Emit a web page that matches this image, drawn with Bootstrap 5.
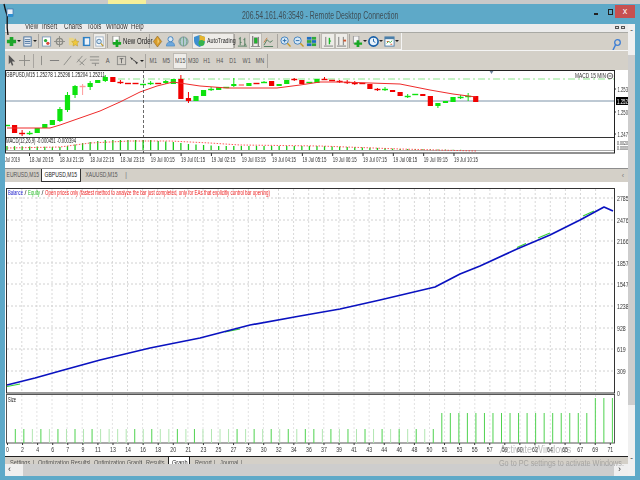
<!DOCTYPE html>
<html lang="en">
<head>
<meta charset="utf-8">
<title>Remote Desktop Connection</title>
<link href="https://cdn.jsdelivr.net/npm/bootstrap@5.3.0/dist/css/bootstrap.min.css" rel="stylesheet">
<style>
html,body{margin:0;width:640px;height:480px;overflow:hidden;background:#5ea9c8;font-family:"Liberation Sans",sans-serif;color:#333}
.page-wrap{position:relative;width:640px;height:480px;filter:blur(.3px)}
.top-strip{height:4px;background:linear-gradient(90deg,#c9c9c9 0,#c9c9c9 108px,#f5ef9a 108px,#f5ef9a 146px,#c9c9c9 146px)}
.title-row{height:20px;position:relative;font-size:11px;color:#3f4f57}
.title-txt{padding-top:3px;white-space:nowrap;transform:scaleX(.63)}
.win-btn{position:absolute;top:1px;height:13px}
.win-min{left:594px;width:4px;top:9px;height:1.5px;background:#222}
.win-max{left:608px;top:5px;width:5px;height:6px;border:1px solid #222}
.win-close{left:615px;width:20px;background:#c75050;color:#fff;font-size:9px;line-height:13px;text-align:center}
.frame-row{height:452px;padding:0 5px}
.main-col{width:623px}
.menu-row{height:8px;background:#ebebeb;overflow:hidden;font-size:8.5px;line-height:4px;color:#333;position:relative}
.menu-row span{position:absolute;top:0;transform:scaleX(.72);transform-origin:left}
.mini-box{position:absolute;top:2px;width:3.5px;height:3px;background:#ddd;border:1px solid #555}
.tbar{background:#d4d0c8;font-size:7.5px;color:#333}
.tbar1{height:18px;border-top:1px solid #a9a9a4;position:relative}
.tbar2{height:20px;position:relative;border-top:1px solid #f5f5f5}
.tool-row{height:100%;width:fit-content}
.tbar1 .tool-row{border-bottom:1px solid #f4f4f4;border-right:1px solid #f4f4f4;padding-right:2px}
.ti{width:13.3px;height:16px;flex:none}
.ti svg{display:block;width:11px;height:11px}
.ti-car{width:2.7px;flex:none;overflow:visible}
.ti-car svg{display:block;margin-left:-1px}
.ti-sep{width:1px;height:14px;background:#a8a5a0;margin:0 1px;flex:none}
.ti-on{background:#eeece8;box-shadow:inset 0 0 0 1px #bdbab4}
.ti-txt{font-size:7.5px;color:#555}
.sq-txt{display:inline-block;white-space:nowrap;transform:scaleX(.72)}
.sq-tab{display:inline-block;white-space:nowrap;transform:scaleX(.63)}
.ti-a{font-size:8px}
.order-lbl{width:25px;flex:none;font-size:8.5px;white-space:nowrap;color:#222;transform:scaleX(.72);transform-origin:left}
.auto-btn{width:42px;height:16px;background:#eeece8;box-shadow:inset 0 0 0 1px #bdbab4;font-size:8px;white-space:nowrap;flex:none;color:#222;padding-left:2px;margin:0 -1px 0 -2px}
.auto-btn svg{flex:none}
.auto-lbl{display:block;flex:none;width:28px;transform:scaleX(.66);transform-origin:left;margin-left:2px}
.side-icons{position:absolute;left:607px;top:6px}
.chart-zone{height:98px;background:#fff}
.chart-zone svg,.test-zone svg{display:block}
.sym-row{height:14px;background:#d4d0c8;border-top:1px solid #8d8d8d;font-size:8px;color:#555;position:relative}
.sym-tab{height:12px;line-height:12px;white-space:nowrap;text-align:center;overflow:visible}
.sym-w1{width:36px}
.sym-w2{width:40px;background:#fff;border:1px solid #333;border-top:0;color:#222;height:13px;border-radius:0 0 1px 1px}
.sym-w3{width:42px}
.sym-w4{width:6px;color:#888}
.sym-arrow{position:absolute;right:4px;top:3px;color:#777;font-size:7px;line-height:7px}
.test-zone{height:275px;background:#fff}
.term-tabs{height:8px;background:#d4d0c8;border-top:1px solid #222;font-size:8px;line-height:11px;color:#555;overflow:hidden;margin-top:-1px;position:relative}
.term-tabs span{position:absolute;top:0;white-space:nowrap;transform:scaleX(.7);transform-origin:left}
.term-on{background:#fff;color:#222}
.term-slot{position:absolute;left:163px;top:-1px;width:22px;height:9px;background:#fff;border-left:1px solid #222;border-right:1px solid #222}
.hscroll{height:12px;background:#cdcdcd;position:relative;font-size:9px;color:#333}
.hs-left{position:absolute;left:0;top:0;width:18px;height:12px;background:#efefef;padding-left:3px;line-height:10px}
.hs-right{position:absolute;right:0;top:0;width:14px;height:12px;background:#efefef;padding-left:4px;line-height:10px}
.vscroll{width:7px;height:452px;background:#f0f0f0;position:relative}
.vs-thumb{position:absolute;left:0;top:31px;width:7px;height:350px;background:#cdcdcd}
.vs-arrow{position:absolute;left:0;width:7px;text-align:center;font-size:8px;line-height:7px;color:#333}
.rdp-squiggle{position:absolute;left:0;top:0;width:20px;height:40px}
.wm-a,.wm-b{position:absolute;color:rgba(120,120,120,.5);white-space:nowrap;transform-origin:left}
.wm-a{left:500px;top:441px;font-size:11px;transform:scaleX(.82)}
.wm-b{left:499px;top:457px;font-size:8.5px;transform:scaleX(.85)}
</style>
</head>
<body>
<div class="page-wrap">
  <div class="top-strip"></div>
  <div class="title-row d-flex justify-content-center">
    <div class="title-txt">206.54.161.46:3549 - Remote Desktop Connection</div>
    <div class="win-btn win-min"></div><div class="win-btn win-max"></div><div class="win-btn win-close">x</div>
  </div>
  <div class="frame-row d-flex">
    <div class="main-col">
      <div class="menu-row"><span style="left:20px">View</span><span style="left:37px">Insert</span><span style="left:59px">Charts</span><span style="left:82px">Tools</span><span style="left:101px">Window</span><span style="left:126px">Help</span><i class="mini-box" style="left:610px"></i><i class="mini-box" style="left:616px"></i></div>
      <div class="tbar tbar1">
        <div class="tool-row d-flex align-items-center">
          <div class="ti d-flex align-items-center justify-content-center"><svg viewBox="0 0 12 12"><path d="M4 1h4v3h3v4H8v3H4V8H1V4h3z" fill="#1fa52b"/></svg></div>
          <div class="ti-car"><svg width="5" height="4" viewBox="0 0 5 4"><path d="M0 1h4L2 3z" fill="#222"/></svg></div>
          <div class="ti d-flex align-items-center justify-content-center"><svg viewBox="0 0 12 12"><rect x="2" y="1" width="8" height="10" fill="#e8eef5" stroke="#47709b"/><path d="M3 4h6M3 6h6M3 8h6" stroke="#47709b"/></svg></div>
          <div class="ti-car"><svg width="5" height="4" viewBox="0 0 5 4"><path d="M0 1h4L2 3z" fill="#222"/></svg></div>
          <div class="ti-sep"></div>
          <div class="ti d-flex align-items-center justify-content-center"><svg viewBox="0 0 12 12"><rect x="1.500" y="1" width="9" height="10" fill="#fff" stroke="#7d9bb8"/><circle cx="5" cy="5" r="1.800" fill="#2eaa3a"/><circle cx="7.500" cy="8" r="1.800" fill="#d94a3a"/></svg></div>
          <div class="ti d-flex align-items-center justify-content-center"><svg viewBox="0 0 12 12"><circle cx="6" cy="6" r="3.500" fill="none" stroke="#8b8b85" stroke-width="1.400"/><path d="M6 0v12M0 6h12" stroke="#8b8b85"/></svg></div>
          <div class="ti d-flex align-items-center justify-content-center"><svg viewBox="0 0 12 12"><path d="M1 2h5l1 2v6H1z" fill="#e9d58a"/><path d="M8 3l1.200 2.600L12 6l-2 2 .5 3L8 9.600 5.500 11 6 8 4 6l2.800-.4z" fill="#f0c93c" stroke="#b99420" stroke-width=".5"/></svg></div>
          <div class="ti d-flex align-items-center justify-content-center"><svg viewBox="0 0 12 12"><rect x="2" y="1" width="8" height="10" fill="#2c7fc4"/><rect x="4" y="2.500" width="5" height="7" fill="#eef4fa"/></svg></div>
          <div class="ti ti-on d-flex align-items-center justify-content-center"><svg viewBox="0 0 12 12"><rect x="2" y="1" width="8" height="10" fill="#fff" stroke="#9cb0c4"/><circle cx="5.500" cy="6" r="2.500" fill="#cfe4f5" stroke="#4f7da6"/><path d="M7.500 8l2.500 3" stroke="#c49a2a" stroke-width="1.300"/></svg></div>
          <div class="ti-sep"></div>
          <div class="ti d-flex align-items-center justify-content-center"><svg viewBox="0 0 12 12"><rect x="2" y="0" width="7" height="8" fill="#fff" stroke="#8b8b85"/><path d="M5 4h3v2.500h3v3H8V12H5V9.500H2v-3h3z" fill="#16a822"/></svg></div>
          <div class="order-lbl">New Order</div>
          <div class="ti-sep"></div>
          <div class="ti d-flex align-items-center justify-content-center"><svg viewBox="0 0 12 12"><path d="M6 0l4.500 6L6 12 1.500 6z" fill="#d89c2c" stroke="#8c611a" stroke-width=".6"/><path d="M6 2L8 6 6 9z" fill="#f2cf74"/></svg></div>
          <div class="ti d-flex align-items-center justify-content-center"><svg viewBox="0 0 12 12"><circle cx="6" cy="3.500" r="2.800" fill="#d6e8f7" stroke="#3d7fbd"/><path d="M1.500 11c0-3.500 2-4.500 4.500-4.500s4.500 1 4.500 4.500z" fill="#6ea8dc" stroke="#3d7fbd" stroke-width=".6"/></svg></div>
          <div class="ti d-flex align-items-center justify-content-center"><svg viewBox="0 0 12 12"><circle cx="6" cy="6" r="5" fill="#b3c9d3" stroke="#7c939d"/><path d="M6 1v10M3.500 2c-1.500 3-1.500 5 0 8M8.500 2c1.500 3 1.500 5 0 8" stroke="#5f9c6a" fill="none" stroke-width=".8"/></svg></div>
          <div class="ti-sep"></div>
          <div class="auto-btn d-flex align-items-center"><svg width="11" height="12" viewBox="0 0 11 12"><path d="M5.500 0L11 2v4c0 3-2.500 5-5.500 6C2.500 11 0 9 0 6V2z" fill="#3d8fd0"/><path d="M5.500 0L11 2v4H5.500z" fill="#e6b52e"/><circle cx="7.500" cy="8" r="3" fill="#37b34a"/></svg><span class="auto-lbl">AutoTrading</span></div>
          <div class="ti-sep"></div>
          <div class="ti d-flex align-items-center justify-content-center"><svg viewBox="0 0 12 12"><path d="M3.500 1v9M2 3h1.500M3.500 7H5M8.500 2v9M7 4h1.500M8.500 9H10M1 11h10" stroke="#4d7a5a" fill="none"/></svg></div>
          <div class="ti ti-on d-flex align-items-center justify-content-center"><svg viewBox="0 0 12 12"><path d="M3 0v11M9 1v11" stroke="#555"/><rect x="4.500" y="2" width="3.500" height="6" fill="#1db82a" stroke="#555" stroke-width=".4"/><path d="M1 11.500h10" stroke="#888"/></svg></div>
          <div class="ti d-flex align-items-center justify-content-center"><svg viewBox="0 0 12 12"><path d="M1 10l3.500-6 3 3 3-2M1 11.500h10" stroke="#4d7a5a" fill="none"/><path d="M1 7l3.500-5" stroke="#c97c3c" fill="none"/></svg></div>
          <div class="ti-sep"></div>
          <div class="ti d-flex align-items-center justify-content-center"><svg viewBox="0 0 12 12"><circle cx="5" cy="5" r="4" fill="#d5e8f7" stroke="#3d7fbd"/><path d="M3 5h4M5 3v4" stroke="#2a6aa8"/><path d="M8 8l3.500 3.500" stroke="#c49a2a" stroke-width="1.500"/></svg></div>
          <div class="ti d-flex align-items-center justify-content-center"><svg viewBox="0 0 12 12"><circle cx="5" cy="5" r="4" fill="#d5e8f7" stroke="#3d7fbd"/><path d="M3 5h4" stroke="#2a6aa8"/><path d="M8 8l3.500 3.500" stroke="#c49a2a" stroke-width="1.500"/></svg></div>
          <div class="ti d-flex align-items-center justify-content-center"><svg viewBox="0 0 12 12"><rect x="1" y="1" width="5" height="3" fill="#1d6fc0"/><rect x="6.500" y="1" width="4.500" height="3" fill="#2fa83a"/><rect x="1" y="4.500" width="5" height="3" fill="#2fa83a"/><rect x="6.500" y="4.500" width="4.500" height="3" fill="#1d6fc0"/><rect x="1" y="8" width="5" height="3" fill="#1d6fc0"/><rect x="6.500" y="8" width="4.500" height="3" fill="#2fa83a"/></svg></div>
          <div class="ti-sep"></div>
          <div class="ti ti-on d-flex align-items-center justify-content-center"><svg viewBox="0 0 12 12"><path d="M3 1v9M1 11h10" stroke="#777"/><path d="M7 2v7" stroke="#1db82a" stroke-width="1.500"/><path d="M7 4l2 1.500L7 7z" fill="#1db82a"/></svg></div>
          <div class="ti ti-on d-flex align-items-center justify-content-center"><svg viewBox="0 0 12 12"><path d="M3 1v9M8 1v9M1 11h10" stroke="#777"/><path d="M8 4h3v2H8z" fill="#d2542c"/></svg></div>
          <div class="ti-sep"></div>
          <div class="ti d-flex align-items-center justify-content-center"><svg viewBox="0 0 12 12"><rect x="1.500" y="0" width="6" height="8" fill="#f4f4f4" stroke="#999"/><path d="M5 4.500h3V7h3v2.500H8V12H5V9.500H2.500V7H5z" fill="#16a822"/></svg></div>
          <div class="ti-car"><svg width="5" height="4" viewBox="0 0 5 4"><path d="M0 1h4L2 3z" fill="#222"/></svg></div>
          <div class="ti d-flex align-items-center justify-content-center"><svg viewBox="0 0 12 12"><circle cx="6" cy="6" r="5" fill="#e8f2fb" stroke="#175fa8" stroke-width="1.800"/><path d="M6 3v3l2 1" stroke="#175fa8" fill="none"/></svg></div>
          <div class="ti-car"><svg width="5" height="4" viewBox="0 0 5 4"><path d="M0 1h4L2 3z" fill="#222"/></svg></div>
          <div class="ti d-flex align-items-center justify-content-center"><svg viewBox="0 0 12 12"><rect x="1" y="1" width="10" height="10" fill="#fff" stroke="#4a7ea8"/><rect x="1" y="1" width="10" height="2.500" fill="#4a7ea8"/><path d="M3 8l2-2 2 1 2-2" stroke="#2fa83a" fill="none"/><path d="M3 6h2M7 9h2" stroke="#d2542c"/></svg></div>
          <div class="ti-car"><svg width="5" height="4" viewBox="0 0 5 4"><path d="M0 1h4L2 3z" fill="#222"/></svg></div>
        </div>
        <div class="side-icons"><svg width="9" height="12" viewBox="0 0 9 12"><circle cx="5.500" cy="3.500" r="2.800" fill="none" stroke="#3f7fd4" stroke-width="1.300"/><path d="M3.500 6L1 11" stroke="#3f7fd4" stroke-width="1.500"/></svg></div>
      </div>
      <div class="tbar tbar2">
        <div class="tool-row d-flex align-items-center">
          <div class="ti d-flex align-items-center justify-content-center"><svg viewBox="0 0 12 12"><path d="M3 0l7 7H6.500L8 11l-1.500.8L5 8l-2 2z" fill="#555"/></svg></div>
          <div class="ti d-flex align-items-center justify-content-center"><svg viewBox="0 0 12 12"><path d="M6 0v12M0 6h12" stroke="#8a8a86"/></svg></div>
          <div class="ti-sep"></div>
          <div class="ti d-flex align-items-center justify-content-center"><svg viewBox="0 0 12 12"><path d="M6 1v10" stroke="#8a8a86"/></svg></div>
          <div class="ti d-flex align-items-center justify-content-center"><svg viewBox="0 0 12 12"><path d="M1 6h10" stroke="#777"/></svg></div>
          <div class="ti d-flex align-items-center justify-content-center"><svg viewBox="0 0 12 12"><path d="M2 11L10 1" stroke="#8a8a86"/></svg></div>
          <div class="ti d-flex align-items-center justify-content-center"><svg viewBox="0 0 12 12"><path d="M1 8l6-7M4 11l7-7M2 5l7 6" stroke="#8a8a86" fill="none"/></svg></div>
          <div class="ti d-flex align-items-center justify-content-center"><svg viewBox="0 0 12 12"><path d="M1 2h10M1 5.500h10M3 9h8" stroke="#8a8a86"/><path d="M7 9v3" stroke="#8a8a86"/></svg></div>
          <div class="ti ti-txt ti-a d-flex align-items-center justify-content-center"><span class="sq-txt">A</span></div>
          <div class="ti d-flex align-items-center justify-content-center"><svg viewBox="0 0 12 12"><rect x="1.500" y="1.500" width="9" height="9" fill="none" stroke="#8a8a86"/><path d="M4 4h4M6 4v5" stroke="#666"/></svg></div>
          <div class="ti d-flex align-items-center justify-content-center"><svg viewBox="0 0 12 12"><path d="M1 2l3.500 2L3 5.500zM6 6l4 2.500-2 1.500z" fill="#444"/><path d="M4 5l3 2" stroke="#444"/></svg></div>
          <div class="ti-car"><svg width="5" height="4" viewBox="0 0 5 4"><path d="M0 1h4L2 3z" fill="#222"/></svg></div>
          <div class="ti-sep"></div>
          <div class="ti ti-txt d-flex align-items-center justify-content-center"><span class="sq-txt">M1</span></div>
          <div class="ti ti-txt d-flex align-items-center justify-content-center"><span class="sq-txt">M5</span></div>
          <div class="ti ti-txt ti-on d-flex align-items-center justify-content-center"><span class="sq-txt">M15</span></div>
          <div class="ti ti-txt d-flex align-items-center justify-content-center"><span class="sq-txt">M30</span></div>
          <div class="ti ti-txt d-flex align-items-center justify-content-center"><span class="sq-txt">H1</span></div>
          <div class="ti ti-txt d-flex align-items-center justify-content-center"><span class="sq-txt">H4</span></div>
          <div class="ti ti-txt d-flex align-items-center justify-content-center"><span class="sq-txt">D1</span></div>
          <div class="ti ti-txt d-flex align-items-center justify-content-center"><span class="sq-txt">W1</span></div>
          <div class="ti ti-txt d-flex align-items-center justify-content-center"><span class="sq-txt">MN</span></div>
          <div class="ti-sep"></div>
        </div>
      </div>
      <div class="chart-zone"><svg id="priceChart" width="623" height="98" viewBox="5 70 623 98"></svg></div>
      <div class="sym-row d-flex">
        <div class="sym-tab sym-w1 d-flex justify-content-center"><span class="sq-tab">EURUSD,M15</span></div>
        <div class="sym-tab sym-w2 d-flex justify-content-center"><span class="sq-tab">GBPUSD,M15</span></div>
        <div class="sym-tab sym-w3 d-flex justify-content-center"><span class="sq-tab">XAUUSD,M15</span></div>
        <div class="sym-tab sym-w4">|</div>
        <div class="sym-arrow">&#8249;</div>
      </div>
      <div class="test-zone"><svg id="testChart" width="623" height="275" viewBox="5 182 623 275"></svg></div>
      <div class="term-tabs">
        <i class="term-slot"></i>
        <span style="left:5px">Settings</span><span style="left:28px">|</span><span style="left:33px">Optimization Results</span><span style="left:84px">|</span><span style="left:89px">Optimization Graph</span><span style="left:136px">|</span><span style="left:141px">Results</span><span class="term-on" style="left:167px">Graph</span><span style="left:190px">Report</span><span style="left:209px">|</span><span style="left:215px">Journal</span><span style="left:236px">|</span>
      </div>
      <div class="hscroll"><div class="hs-left">&#8249;</div><div class="hs-right">&#8250;</div></div>
    </div>
    <div class="vscroll">
      <div class="vs-arrow" style="top:5px">&#710;</div>
      <div class="vs-thumb"></div>
      <div class="vs-arrow" style="top:433px">&#711;</div>
    </div>
  </div>
  <svg class="rdp-squiggle" viewBox="0 0 20 40"><path d="M4 4c1 5 2 8 3 11s-1 8 1 20" fill="none" stroke="#111" stroke-width="1.300"/><rect x="7" y="9" width="6" height="7" fill="#e8f0f8" stroke="#3c6ea8" stroke-width=".7"/><rect x="8" y="14" width="5" height="3" fill="#2f8fd0"/></svg>
  <div class="wm-a">Activate Windows</div>
  <div class="wm-b">Go to PC settings to activate Windows.</div>
</div>
<script>
(function(){
function txt(x,y,s,o){o=o||{};return '<text x="'+x+'" y="'+y+'" font-family="Liberation Sans,sans-serif" font-size="'+(o.s||7)+'" fill="'+(o.c||'#333')+'"'+(o.l?' textLength="'+o.l+'" lengthAdjust="spacingAndGlyphs"':'')+'>'+s+'</text>';}
function ln(a,b,c,d,col,w,dash){return '<line x1="'+a+'" y1="'+b+'" x2="'+c+'" y2="'+d+'" stroke="'+col+'" stroke-width="'+(w||1)+'"'+(dash?' stroke-dasharray="'+dash+'"':'')+'/>';}
function poly(p,col,w){return '<polyline fill="none" stroke="'+col+'" stroke-width="'+w+'" stroke-linejoin="round" points="'+p.map(function(q){return q.join(',')}).join(' ')+'"/>';}
var G='#0ee30e',R='#f00000',P='#ff9a9a';
var C=[[G,125,126],[R,125,133],[R,133,133,130,136],[G,133,133,131,135],[G,128,133],[G,124,128],[G,120,125],[G,109,121,107,122],[G,95,110,92,112],[G,86,95,85,98],[P,86,87,84,95],[G,83,87,81,90],[G,80,83],[G,77,81,75,82],[R,77,82],[R,82,82,80,84],[R,83,83],[R,83,83],[G,84,84],[G,83,83,81,85],[R,83,83],[G,81,83,80,84],[G,79,84],[R,79,99,75,99],[R,98,101,92,103],[G,96,101],[G,90,96],[G,89,89,87,91],[G,87,90],[G,87,87],[G,84,86,78,87],[P,84,86],[G,83,86],[R,83,83],[G,82,82,81,83],[R,81,86],[G,84,86],[G,80,84],[R,79,79,78,81],[R,80,84],[G,82,83],[G,79,83],[R,79,79,77,80],[R,80,81],[R,81,81,80,83],[R,82,82,80,84],[R,83,83,81,85],[R,83,84],[R,84,89],[R,89,89,88,91],[G,89,89,87,91],[R,90,92],[R,92,96],[G,96,96,94,98],[G,94,94],[R,94,96],[R,96,106],[G,103,106,103,108],[G,101,103],[G,97,102],[G,97,97,95,99],[G,96,96,93,101],[R,96,102]];
var h='';
h+='<rect x="5" y="70" width="623" height="98" fill="#fff"/>';
h+=ln(5,101,615,101,'#7d93a8',1);
h+=ln(118,79,615,79,'#8ee88e',1.2,'7 3 2 3');
var ma=[[7,128],[15,128],[50,128],[60,125],[80,118],[100,111],[120,102],[140,92],[157,86],[173,82],[200,86],[227,88],[277,88],[300,85],[320,82],[340,82],[400,84],[430,90],[453,94],[476,97]];
C.forEach(function(c,i){var x=7+7.56*i;
 if(c[3]!==undefined)h+=ln(x,c[3],x,c[4],c[0],1);
 if(c[2]-c[1]<=1)h+=ln(x-3,c[1]+.5,x+3,c[1]+.5,c[0],1.4);
 else h+='<rect x="'+(x-2.6)+'" y="'+c[1]+'" width="5.200" height="'+(c[2]-c[1])+'" fill="'+c[0]+'"/>';
});
h+=poly(ma,'#ef2b2b',1);
h+=ln(143.5,70,143.5,153,'#444',.8,'3 2');
h+=ln(5,137.5,615,137.5,'#333',1.2);
h+=ln(5,150.5,615,150.5,'#aaa',1);
var mt=[[7,146],[60,147],[68,146],[83,143],[90,142],[98,141],[105,140],[150,140],[158,141],[173,142],[188,144],[204,145],[220,146],[320,146],[380,148],[400,149],[476,150]];
function interp(a,x){for(var i=1;i<a.length;i++){if(x<=a[i][0]){var t=(x-a[i-1][0])/(a[i][0]-a[i-1][0]);return a[i-1][1]+t*(a[i][1]-a[i-1][1]);}}return a[a.length-1][1];}
C.forEach(function(c,i){var x=7+7.56*i;h+=ln(x,interp(mt,x),x,150,'#16c916',1.3);});
h+=poly([[7,148],[60,147],[90,143],[130,141],[170,141],[210,143],[240,145],[320,146],[400,149],[476,151]],'#ff3030',.8).replace('<polyline','<polyline stroke-dasharray="1.5 1.5"');
h+=txt(6,143,'MACD(12,26,9) -0.000451 -0.000394',{s:7,l:70,c:'#222'});
h+=txt(6,77,'GBPUSD,M15 1.25278 1.25296 1.25204 1.25211',{s:7,l:99,c:'#222'});
h+=txt(575,78,'MACD 15 MIN',{s:7,l:31,c:'#333'});
h+='<circle cx="610" cy="76" r="2.800" fill="none" stroke="#666"/><path d="M608.500 76h3" stroke="#666"/>';
h+='<path d="M489 70h5l-2.500 4z" fill="#6f86a0"/>';
h+='<rect x="5.500" y="70.500" width="609" height="82.500" fill="none" stroke="#222"/>';
[[92,'1.253'],[115,'1.250'],[137,'1.247']].forEach(function(a){h+=ln(615,a[0]-3,616,a[0]-3,'#333');h+=txt(617.5,a[0],a[1],{s:7,l:10.5});});
h+='<rect x="616" y="97" width="12" height="8" fill="#000"/>'+txt(617,103.5,'1.252',{s:7,l:11,c:'#fff'});
h+=txt(617,145,'0.0020',{s:6,l:11})+txt(617,150,'0.0000',{s:6,l:11});
var tl=['18 Jul 20:15','18 Jul 21:15','18 Jul 22:15','18 Jul 23:15','19 Jul 00:15','19 Jul 01:15','19 Jul 02:15','19 Jul 03:15','19 Jul 04:15','19 Jul 05:15','19 Jul 06:15','19 Jul 07:15','19 Jul 08:15','19 Jul 09:15','19 Jul 10:15'];
h+=txt(5,162,'Jul 2019',{s:7,l:15});
tl.forEach(function(s,i){var x=29.5+30.32*i;h+=ln(x,153,x,156,'#333');h+=txt(x,162,s,{s:7,l:24});});
document.getElementById('priceChart').innerHTML=h;

var t='<rect x="5" y="182" width="623" height="275" fill="#fff"/>';
for(var k=1;k<40;k++){var gx=6.7+15.1*k;t+=ln(gx,189,gx,392,'#d8d8d8',1,'2 2');t+=ln(gx,395,gx,442,'#e2e2e2',1,'2 2');}
var yl=[[198,'2785'],[220,'2476'],[241,'2166'],[263,'1857'],[284,'1547'],[306,'1238'],[328,'928'],[349,'619'],[371,'309'],[393,'0']];
yl.forEach(function(a){if(a[1]!='0')t+=ln(7,a[0],614,a[0],'#d0d0d0',1,'2 2');t+=txt(617,a[0]+2.5,a[1],{s:7,l:a[1].length*2.9,c:'#333'});});
var bal=[[7,385],[35,378],[60,371],[100,360],[150,348],[200,338],[250,325],[300,316],[340,309],[380,300],[435,287],[460,274],[480,266],[517,249],[550,235],[580,220],[604,207],[613,211]];
[[[7,386.5],[20,384]],[[225,332],[240,329]],[[517,247.5],[526,243.5]],[[538,238],[550,233]],[[583,216],[594,211]]].forEach(function(s){t+=poly(s,'#37d037',1.2);});
t+=poly(bal,'#0a12c0',1.7);
t+=txt(8,194.5,'Balance',{s:7,l:15,c:'#2222cc'})+txt(24.5,194.5,'/',{s:7})+txt(28,194.5,'Equity',{s:7,l:12,c:'#22bb22'})+txt(41.5,194.5,'/',{s:7})+txt(45,194.5,'Open prices only (fastest method to analyze the bar just completed, only for EAs that explicitly control bar opening)',{s:7,l:225,c:'#ee2222'});
t+='<rect x="6.500" y="188.500" width="608" height="204.500" fill="none" stroke="#333"/>';
t+='<rect x="6.500" y="394.500" width="608" height="48.500" fill="none" stroke="#555"/>';
t+=txt(8,402,'Size',{s:7,l:8,c:'#222'});
var dark=[0,1,3,5,7,9,14,16,19,21,26,28,30,32,34,35];
for(var i=0;i<=70;i++){var bx=15.3+8.53*i;var bt=i>=68?398:(i>=50?413:429);var col=(i>=49||dark.indexOf(i)>=0||(i>35&&i%2==1))?'#4fd24f':'#b2e6b2';t+=ln(bx,bt,bx,443,col,1);}
var xl=['0','2','4','6','7','9','11','13','14','16','18','20','21','23','25','27','29','30','32','34','36','37','39','41','43','44','46','48','50','51','53','55','57','59','60','62','64','65','67','69','71'];
xl.forEach(function(s,i){var lx=7.5+15.07*i;t+=ln(lx,443,lx,445,'#333');t+='<text x="'+(lx-s.length*1.45)+'" y="452" textLength="'+(s.length*2.9)+'" lengthAdjust="spacingAndGlyphs" font-family="Liberation Sans,sans-serif" font-size="7" fill="#333">'+s+'</text>';});
document.getElementById('testChart').innerHTML=t;
})();
</script>
<script src="https://cdn.jsdelivr.net/npm/bootstrap@5.3.0/dist/js/bootstrap.bundle.min.js"></script>
</body>
</html>
